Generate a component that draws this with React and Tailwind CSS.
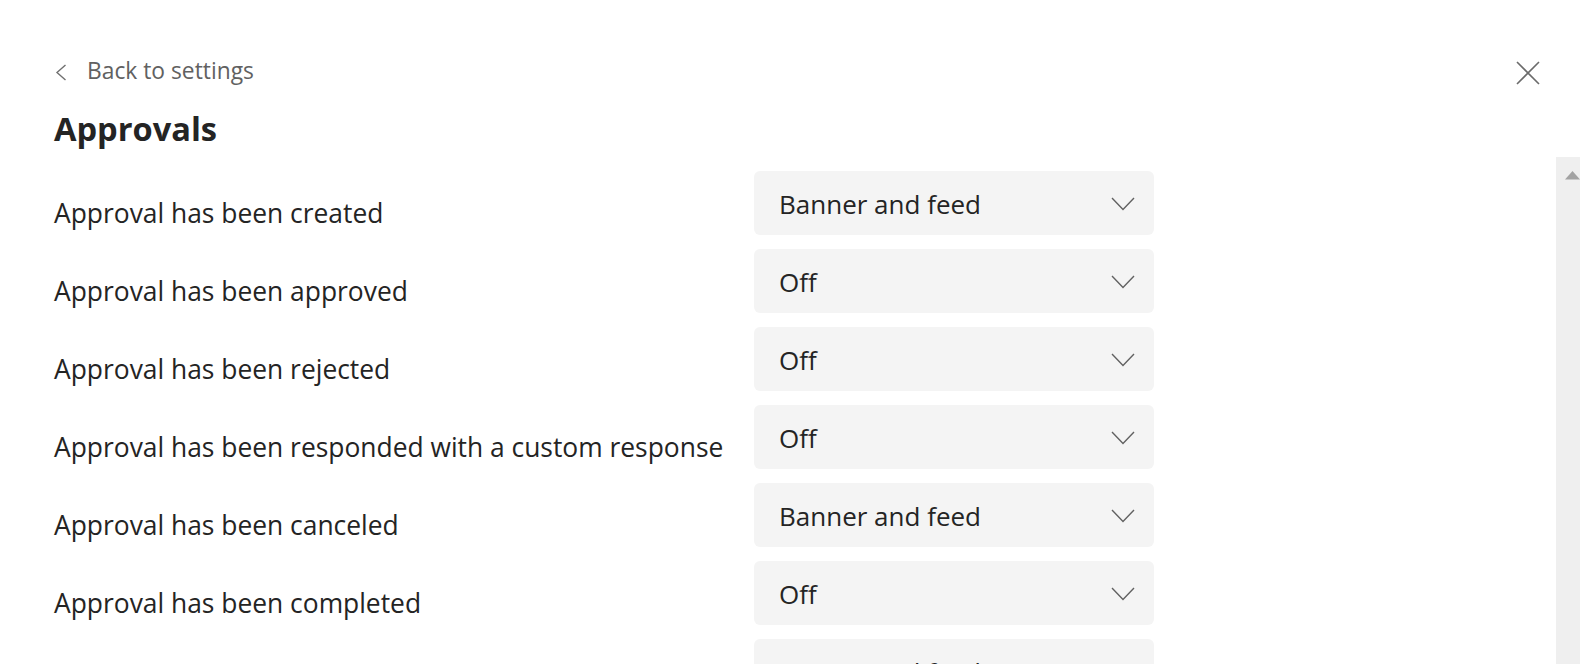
import React from 'react';

const rows = [
  { label: 'Approval has been created', value: 'Banner and feed' },
  { label: 'Approval has been approved', value: 'Off' },
  { label: 'Approval has been rejected', value: 'Off' },
  { label: 'Approval has been responded with a custom response', value: 'Off' },
  { label: 'Approval has been canceled', value: 'Banner and feed' },
  { label: 'Approval has been completed', value: 'Off' },
  { label: 'Approval has been reassigned', value: 'Banner and feed' },
];

const Chevron = () => (
  <svg width="24" height="14" viewBox="0 0 24 14" fill="none">
    <polyline points="1,1 12,12.5 23,1" stroke="#616161" strokeWidth="1.4" />
  </svg>
);

const Dropdown = ({ value }) => (
  <div className="h-[64px] w-[400px] rounded-[6px] bg-[#f4f4f4] flex items-center justify-between pl-[25px] pr-[19px] pt-[2px]">
    <span className="text-[26px] leading-[36px] text-[#242424]">{value}</span>
    <span>
      <Chevron />
    </span>
  </div>
);

export default function App() {
  return (
    <div className="h-[664px] w-[1580px] overflow-hidden bg-white flex flex-col font-['Segoe_UI','Open_Sans',sans-serif]">
      {/* header */}
      <div className="h-[157px] shrink-0 flex items-start justify-between pl-[54px] pr-[40px] pt-[56px]">
        <div className="flex flex-col">
          <button className="flex items-center h-[30px] text-[#616161]">
            <svg width="12" height="17" viewBox="0 0 12 17" fill="none" className="ml-[1px] mt-[2px]">
              <polyline points="10.5,1 2,8.5 10.5,16" stroke="#707070" strokeWidth="1.4" />
            </svg>
            <span className="ml-[20px] text-[22.8px] leading-[30px]">Back to settings</span>
          </button>
          <h1 className="mt-[23px] text-[32.6px] leading-[40px] font-bold text-[#242424]">Approvals</h1>
        </div>
        <button className="mt-[5px]">
          <svg width="24" height="24" viewBox="0 0 24 24" fill="none">
            <path d="M1 1L23 23M23 1L1 23" stroke="#6b6b6b" strokeWidth="1.6" />
          </svg>
        </button>
      </div>

      {/* body */}
      <div className="flex flex-1 min-h-0">
        <div className="flex-1 overflow-hidden pl-[54px] pt-[14px]">
          <div className="grid grid-cols-[700px_400px] gap-y-[14px]">
            {rows.map((r) => (
              <React.Fragment key={r.label}>
                <div className="pt-[24px] text-[26.4px] leading-[36px] text-[#242424] whitespace-nowrap">{r.label}</div>
                <Dropdown value={r.value} />
              </React.Fragment>
            ))}
          </div>
        </div>
        <div className="w-[24px] shrink-0 bg-[#efefef] pt-[14px] pl-[9px]">
          <svg width="15" height="9" viewBox="0 0 15 9">
            <polygon points="7.5,0 15,8.5 0,8.5" fill="#a3a3a3" />
          </svg>
        </div>
      </div>
    </div>
  );
}
